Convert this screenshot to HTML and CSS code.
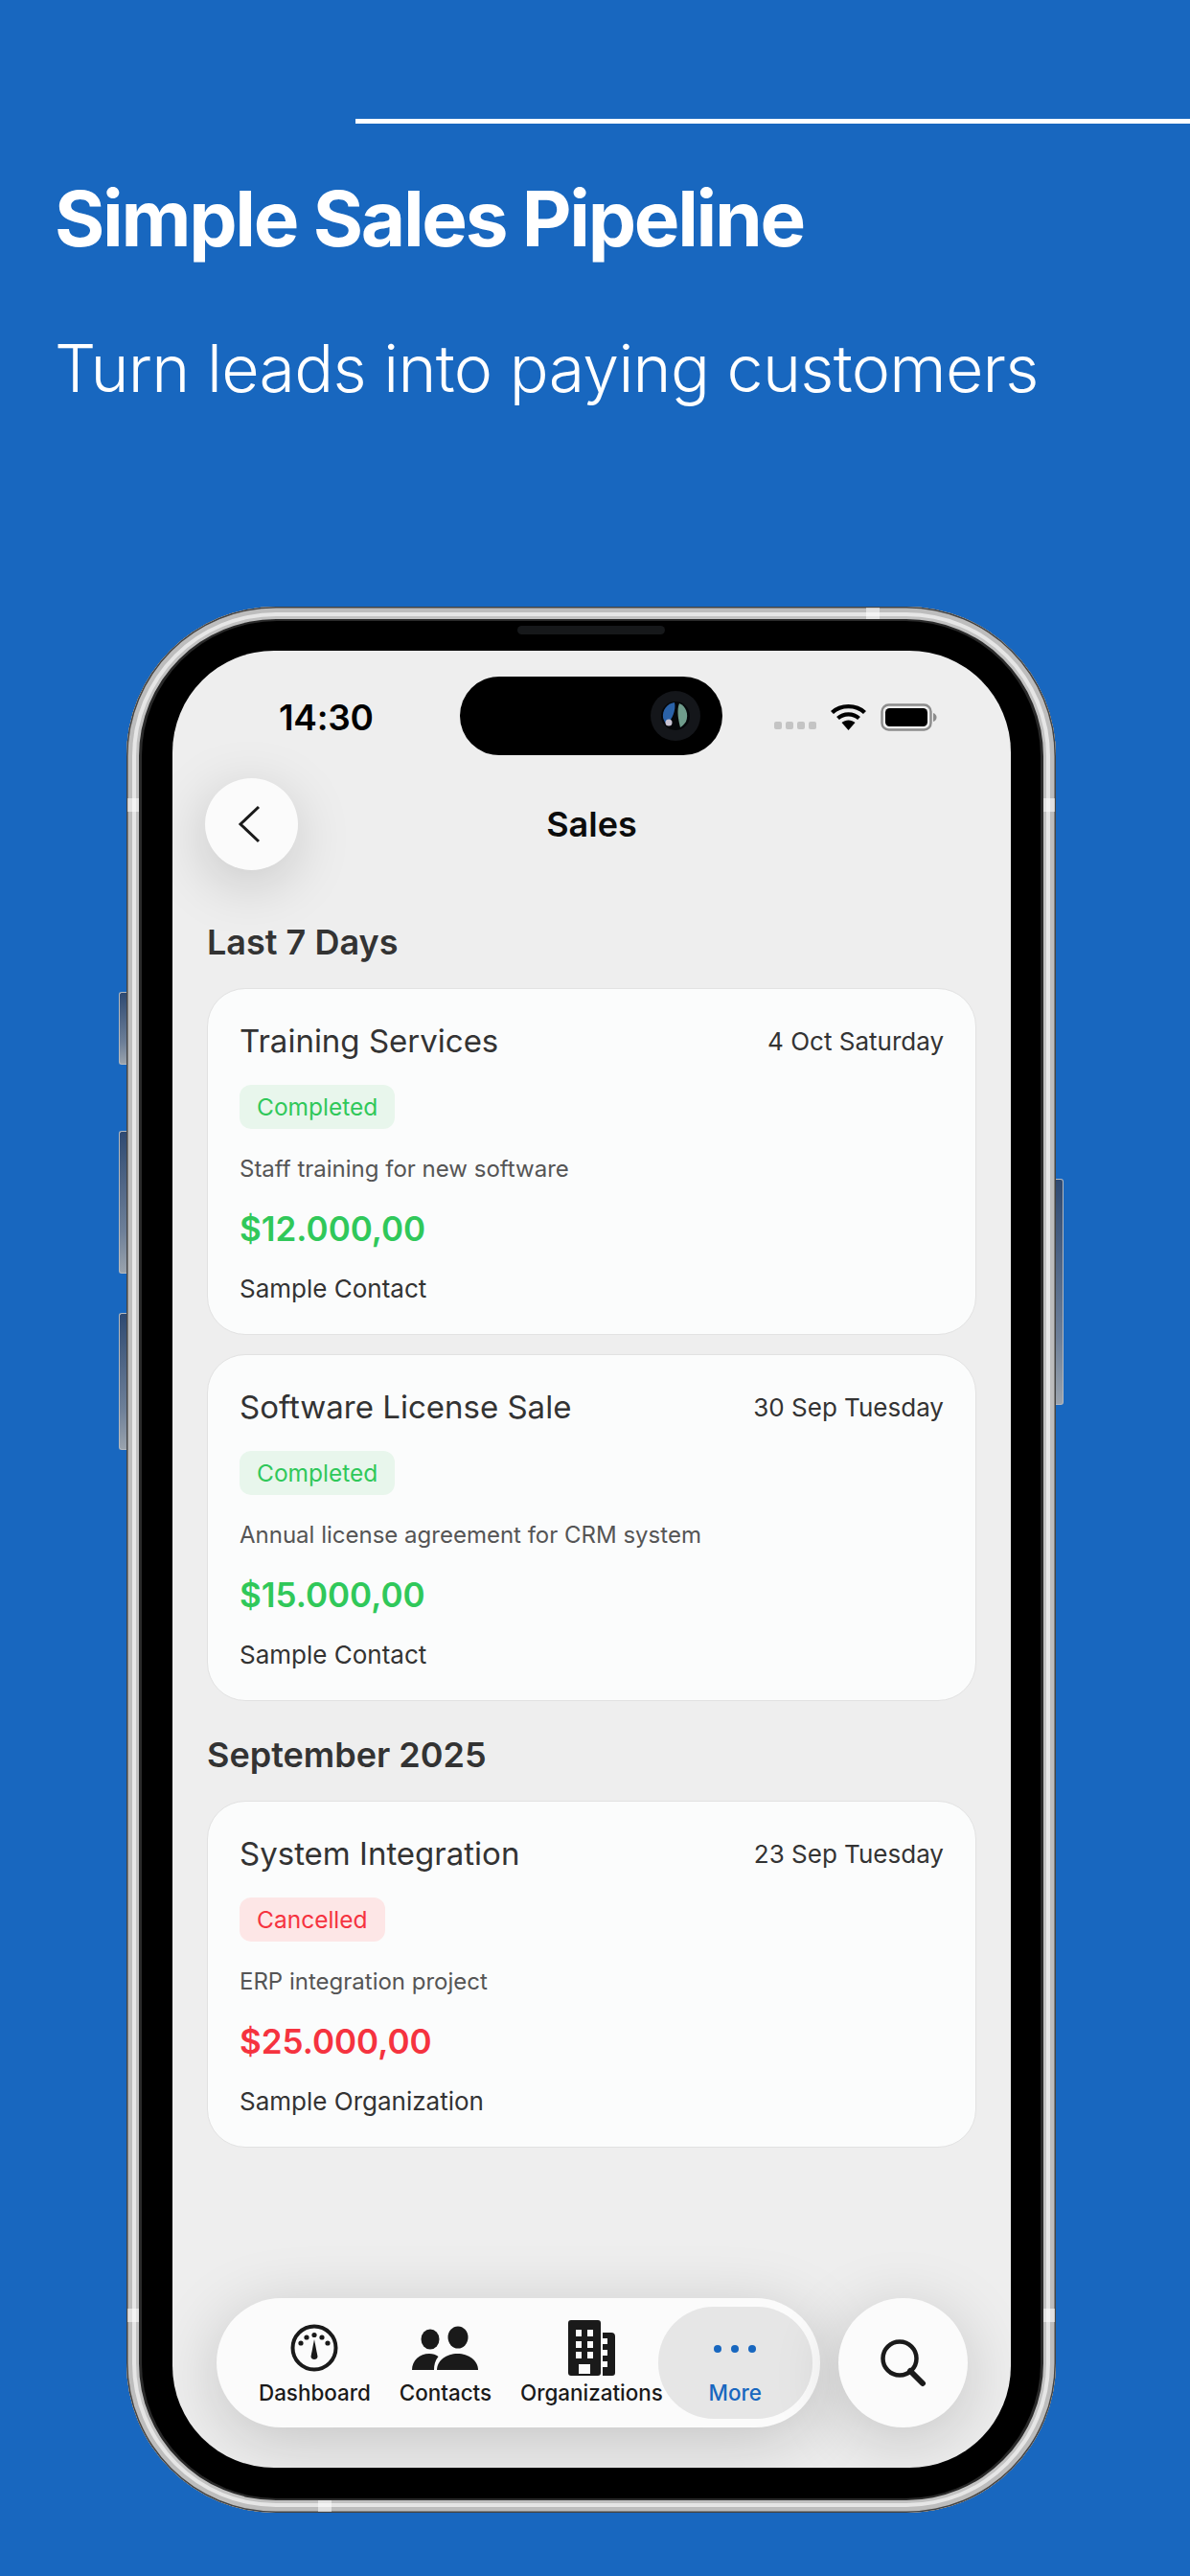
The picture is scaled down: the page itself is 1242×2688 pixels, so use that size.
FILE: index.html
```html
<!DOCTYPE html>
<html lang="en">
<head>
    <meta charset="UTF-8">
    <meta name="viewport" content="width=device-width, initial-scale=1.0">
    <title>Simple Sales Pipeline</title>
    <link rel="stylesheet" href="styles.css">
</head>
<body>
    <div class="top-line"></div>
    <h1 class="headline">Simple Sales Pipeline</h1>
    <p class="subline">Turn leads into paying customers</p>

    <div class="phone">
        <span class="side-btn btn-action"></span>
        <span class="side-btn btn-vol-up"></span>
        <span class="side-btn btn-vol-down"></span>
        <span class="side-btn btn-power"></span>
        <span class="band band-top"></span>
        <span class="band band-bottom"></span>
        <span class="band band-left-a"></span>
        <span class="band band-left-b"></span>
        <span class="band band-right-a"></span>
        <span class="band band-right-b"></span>

        <div class="bezel">
            <span class="speaker"></span>
            <div class="screen">
                <div class="island">
                    <svg class="lens" width="52" height="52" viewBox="0 0 52 52">
                        <circle cx="26" cy="26" r="26" fill="#14161a"/>
                        <circle cx="26" cy="26" r="15" fill="#05070a"/>
                        <path d="M25 12 C17 13 12 20 13 28 C14 31 15 33 17 35 C22 30 27 20 25 12Z" fill="#2a62a8"/>
                        <path d="M30 13 C37 16 40 24 37 32 C35 35 33 37 31 38 C29 30 27 20 30 13Z" fill="#6f9c8c"/>
                        <circle cx="19" cy="33" r="3.5" fill="#c9c4d4"/>
                    </svg>
                </div>

                <div class="status-bar">
                    <span class="clock">14:30</span>
                    <div class="status-icons">
                        <div class="signal"><i></i><i></i><i></i><i></i></div>
                        <svg width="37" height="28" viewBox="0 0 37 28">
                            <path d="M1.5 9.5 C10.5 1 26.5 1 35.5 9.5" fill="none" stroke="#000" stroke-width="4.4"/>
                            <path d="M7.5 15.5 C13.5 10 23.5 10 29.5 15.5" fill="none" stroke="#000" stroke-width="4.2"/>
                            <path d="M18.5 28 L11.5 20 C15.5 16.5 21.5 16.5 25.5 20Z" fill="#000"/>
                        </svg>
                        <svg width="59" height="29" viewBox="0 0 59 29">
                            <rect x="1.5" y="1.5" width="51" height="26" rx="7" fill="none" stroke="#8c8c8c" stroke-width="2.4"/>
                            <rect x="5" y="5" width="44" height="19" rx="4.5" fill="#000"/>
                            <path d="M55 10 C57.5 11 58.5 12.5 58.5 14.5 C58.5 16.5 57.5 18 55 19Z" fill="#8c8c8c"/>
                        </svg>
                    </div>
                </div>

                <div class="nav-bar">
                    <div class="back-btn">
                        <svg width="26" height="40" viewBox="0 0 26 40">
                            <path d="M23 2 L4 20 L23 38" fill="none" stroke="#1a1a1a" stroke-width="3"/>
                        </svg>
                    </div>
                    <div class="nav-title">Sales</div>
                </div>

                <h2 class="section-title first">Last 7 Days</h2>
                <div class="card">
                    <div class="card-head">
                        <span class="card-title">Training Services</span>
                        <span class="card-date">4 Oct Saturday</span>
                    </div>
                    <span class="badge badge-green">Completed</span>
                    <div class="card-desc">Staff training for new software</div>
                    <div class="card-amount green">$12.000,00</div>
                    <div class="card-contact">Sample Contact</div>
                </div>
                <div class="card">
                    <div class="card-head">
                        <span class="card-title">Software License Sale</span>
                        <span class="card-date">30 Sep Tuesday</span>
                    </div>
                    <span class="badge badge-green">Completed</span>
                    <div class="card-desc">Annual license agreement for CRM system</div>
                    <div class="card-amount green">$15.000,00</div>
                    <div class="card-contact">Sample Contact</div>
                </div>

                <h2 class="section-title">September 2025</h2>
                <div class="card">
                    <div class="card-head">
                        <span class="card-title">System Integration</span>
                        <span class="card-date">23 Sep Tuesday</span>
                    </div>
                    <span class="badge badge-red">Cancelled</span>
                    <div class="card-desc">ERP integration project</div>
                    <div class="card-amount red">$25.000,00</div>
                    <div class="card-contact">Sample Organization</div>
                </div>

                <div class="bottom-row">
                    <div class="tab-bar">
                        <div class="tab">
                            <svg class="tab-icon" width="50" height="60" viewBox="0 0 50 60">
                                <circle cx="25" cy="31" r="22.5" fill="none" stroke="#1a1a1a" stroke-width="4"/>
                                <circle cx="11" cy="26" r="2.6" fill="#1a1a1a"/>
                                <circle cx="17" cy="20" r="2.6" fill="#1a1a1a"/>
                                <circle cx="25" cy="17.5" r="2.6" fill="#1a1a1a"/>
                                <circle cx="33" cy="20" r="2.6" fill="#1a1a1a"/>
                                <circle cx="39" cy="26" r="2.6" fill="#1a1a1a"/>
                                <path d="M25 22 L28.5 40 C28.5 44 21.5 44 21.5 40Z" fill="#1a1a1a"/>
                            </svg>
                            <span class="tab-label">Dashboard</span>
                        </div>
                        <div class="tab">
                            <svg class="tab-icon" width="69" height="60" viewBox="0 -4 69 60">
                                <ellipse cx="19" cy="18" rx="9.5" ry="10.5" fill="#1a1a1a"/>
                                <ellipse cx="48" cy="16" rx="10.5" ry="11.5" fill="#1a1a1a"/>
                                <path d="M0 50 C0 40 8 33 18 33 C22 33 25 34 27.5 36 C24 40 23 45 23 50Z" fill="#1a1a1a"/>
                                <path d="M26 50 C26 40 36 33 47.5 33 C59 33 69 40 69 50Z" fill="#1a1a1a"/>
                            </svg>
                            <span class="tab-label">Contacts</span>
                        </div>
                        <div class="tab tab-org">
                            <svg class="tab-icon" width="49" height="60" viewBox="0 -1 49 60">
                                <path fill-rule="evenodd" fill="#1a1a1a" d="M3 1 H31 Q34 1 34 4 V56 Q34 59 31 59 H3 Q0 59 0 56 V4 Q0 1 3 1Z M8 11 V18 H14 V11Z M20 11 V18 H26 V11Z M8 23 V30 H14 V23Z M20 23 V30 H26 V23Z M8 34 V41 H14 V34Z M20 34 V41 H26 V34Z M11 47 V57 H23 V47Z"/>
                                <path fill-rule="evenodd" fill="#1a1a1a" d="M36 14 H45 Q49 14 49 18 V56 Q49 59 46 59 H36 V50 H41 V44 H36 V38 H41 V32 H36 V26 H41 V20 H36Z"/>
                            </svg>
                            <span class="tab-label">Organizations</span>
                        </div>
                        <div class="tab tab-active">
                            <div class="more-dots"><i></i><i></i><i></i></div>
                            <span class="tab-label">More</span>
                        </div>
                    </div>
                    <div class="search-btn">
                        <svg width="50" height="50" viewBox="0 0 50 50">
                            <circle cx="21" cy="20" r="17.5" fill="none" stroke="#1a1a1a" stroke-width="4.5"/>
                            <path d="M32 33 L45 46" fill="none" stroke="#1a1a1a" stroke-width="6" stroke-linecap="round"/>
                        </svg>
                    </div>
                </div>
            </div>
        </div>
    </div>
</body>
</html>
```

FILE: styles.css
```css
* {
    box-sizing: border-box;
}

html, body {
    margin: 0;
    padding: 0;
}

body {
    width: 1242px;
    height: 2688px;
    overflow: hidden;
    padding-top: 124px;
    background-color: #1867bf;
    font-family: "Inter", "Liberation Sans", sans-serif;
}

.top-line {
    height: 5px;
    margin-left: 371px;
    background-color: #ffffff;
}

.headline {
    margin: 51px 0 0 57px;
    font-size: 80px;
    line-height: 96px;
    font-weight: 700;
    letter-spacing: -2.3px;
    color: #ffffff;
}

.subline {
    margin: 68px 0 0 57px;
    font-size: 68px;
    line-height: 80px;
    font-weight: 300;
    letter-spacing: -0.7px;
    color: #ffffff;
}

/* phone frame */
.phone {
    position: relative;
    width: 970px;
    height: 1989px;
    margin: 209px 0 0 132px;
    padding: 15px 16px;
    border-radius: 156px;
    background-color: #2a2a2a;
    box-shadow:
        inset 0 0 0 1.5px #444444,
        inset 0 0 0 6px #bdbdbd,
        inset 0 0 0 10px #e6e6e6,
        inset 0 0 0 13px #c2c2c2,
        inset 0 0 0 16px #2a2a2a;
}

.side-btn {
    position: absolute;
    width: 8px;
    background: linear-gradient(#2f4a72, #6d7f98 70%, #9aa3ad);
    border: 1px solid #b5b9be;
}

.btn-action, .btn-vol-up, .btn-vol-down {
    left: -8px;
    border-right: none;
    border-radius: 3px 0 0 3px;
}

.btn-action { top: 402px; height: 76px; }
.btn-vol-up { top: 547px; height: 149px; }
.btn-vol-down { top: 737px; height: 143px; }

.btn-power {
    right: -8px;
    top: 597px;
    height: 236px;
    border-left: none;
    border-radius: 0 3px 3px 0;
}

.band {
    position: absolute;
    background-color: rgba(255, 255, 255, 0.55);
}

.band-top { top: 1px; left: 772px; width: 14px; height: 12px; }
.band-bottom { bottom: 1px; left: 200px; width: 14px; height: 12px; }
.band-left-a { left: 1px; top: 200px; width: 12px; height: 14px; }
.band-left-b { left: 1px; top: 1776px; width: 12px; height: 14px; }
.band-right-a { right: 1px; top: 200px; width: 12px; height: 14px; }
.band-right-b { right: 1px; top: 1776px; width: 12px; height: 14px; }

.bezel {
    position: relative;
    height: 100%;
    padding: 31px 31px 32px 32px;
    border-radius: 141px;
    background-color: #000000;
}

.speaker {
    position: absolute;
    top: 5px;
    left: 392px;
    width: 154px;
    height: 9px;
    border-radius: 5px;
    background-color: #16181a;
}

.screen {
    position: relative;
    display: flex;
    flex-direction: column;
    height: 100%;
    padding: 0 36px 42px 36px;
    overflow: hidden;
    border-radius: 106px;
    background-color: #eeeeee;
}

.island {
    position: absolute;
    top: 27px;
    left: 300px;
    display: flex;
    align-items: center;
    justify-content: flex-end;
    width: 274px;
    height: 82px;
    padding-right: 23px;
    border-radius: 41px;
    background-color: #000000;
}

.status-bar {
    display: flex;
    align-items: center;
    justify-content: space-between;
    flex: none;
    height: 138px;
    margin: 0 41px 0 75px;
}

.clock {
    font-size: 37px;
    font-weight: 600;
    letter-spacing: -0.3px;
    color: #000000;
}

.status-icons {
    display: flex;
    align-items: center;
    gap: 15px;
}

.signal {
    display: flex;
    gap: 4px;
    align-self: flex-end;
    padding-bottom: 2px;
}

.signal i {
    display: block;
    width: 8px;
    height: 8px;
    border-radius: 2px;
    background-color: #c4c4c4;
}

.nav-bar {
    position: relative;
    display: flex;
    align-items: center;
    justify-content: center;
    flex: none;
    height: 96px;
    margin-top: -5px;
}

.back-btn {
    position: absolute;
    left: -2px;
    top: 0;
    display: flex;
    align-items: center;
    justify-content: center;
    width: 97px;
    height: 96px;
    padding-right: 6px;
    border-radius: 50%;
    background-color: #fbfbfb;
    box-shadow: -2px 14px 60px rgba(0, 0, 0, 0.17);
}

.nav-title {
    font-size: 36px;
    line-height: 44px;
    font-weight: 600;
    color: #0c0c0c;
}

.section-title {
    flex: none;
    margin: 34px 0 26px;
    font-size: 36px;
    line-height: 44px;
    font-weight: 600;
    color: #333333;
}

.section-title.first {
    margin-top: 53px;
}

.card {
    flex: none;
    display: flex;
    flex-direction: column;
    align-items: flex-start;
    height: 362px;
    margin-bottom: 20px;
    padding: 32px 33px 0;
    border: 1px solid #e2e2e2;
    border-radius: 40px;
    background-color: #fbfcfc;
}

.card + .section-title {
    margin-top: 14px;
}

.card-head {
    display: flex;
    align-items: center;
    justify-content: space-between;
    width: 100%;
    height: 44px;
}

.card-title {
    font-size: 33px;
    font-weight: 400;
    color: #333333;
}

.card-date {
    font-size: 26px;
    color: #333333;
}

.badge {
    margin-top: 24px;
    height: 46px;
    padding: 0 18px;
    border-radius: 12px;
    font-size: 24.5px;
    line-height: 46px;
}

.badge-green {
    background-color: #e8f6ec;
    color: #30c85a;
}

.badge-red {
    background-color: #fde6e6;
    color: #f5333f;
}

.card-desc {
    margin-top: 25px;
    font-size: 24px;
    line-height: 34px;
    color: #555555;
}

.card-amount {
    margin-top: 23px;
    font-size: 35px;
    line-height: 44px;
    font-weight: 600;
}

.green { color: #30c85a; }
.red { color: #f5333f; }

.card-contact {
    margin-top: 23px;
    font-size: 26px;
    line-height: 36px;
    color: #333333;
}

/* floating tab bar */
.bottom-row {
    display: flex;
    gap: 19px;
    flex: none;
    margin-top: auto;
    margin-left: 10px;
}

.tab-bar {
    display: flex;
    gap: 30px;
    width: 630px;
    height: 135px;
    padding: 9px 8px 9px 44px;
    border-radius: 68px;
    background-color: #fbfbfb;
    box-shadow: 0 14px 70px rgba(0, 0, 0, 0.18);
}

.tab {
    display: flex;
    flex-direction: column;
    align-items: center;
    flex: none;
}

.tab-icon {
    margin-top: 12px;
}

.tab-org {
    z-index: 1;
}

.tab-active {
    width: 161px;
    margin-left: -35px;
    border-radius: 58px;
    background-color: #e6e6e6;
}

.tab-label {
    margin-top: 4px;
    font-size: 22.4px;
    line-height: 27px;
    font-weight: 500;
    color: #1a1a1a;
    white-space: nowrap;
}

.tab-active .tab-label {
    color: #1867bf;
}

.more-dots {
    display: flex;
    gap: 10px;
    align-items: center;
    height: 60px;
    margin-top: 12px;
    padding-top: 4px;
}

.more-dots i {
    display: block;
    width: 8px;
    height: 8px;
    border-radius: 50%;
    background-color: #1867bf;
}

.search-btn {
    display: flex;
    align-items: center;
    justify-content: center;
    width: 135px;
    height: 135px;
    border-radius: 50%;
    background-color: #fbfbfb;
    box-shadow: 0 14px 70px rgba(0, 0, 0, 0.18);
}
```
